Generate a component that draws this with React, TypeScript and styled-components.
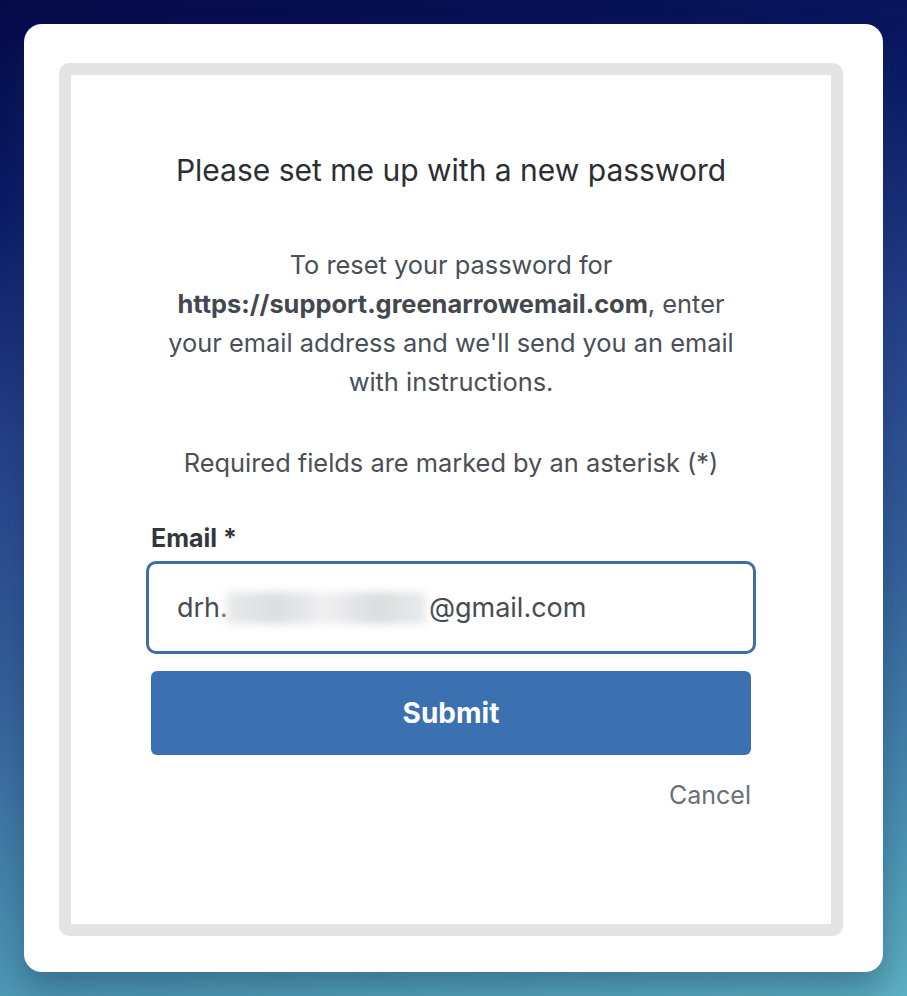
import React from 'react';
import styled, { createGlobalStyle } from 'styled-components';

const GlobalStyle = createGlobalStyle`
  html, body {
    margin: 0;
    padding: 0;
  }
  body {
    font-family: Inter, Roboto, "Liberation Sans", sans-serif;
  }
`;

const Page = styled.div`
  width: 907px;
  height: 996px;
  box-sizing: border-box;
  padding: 24px;
  background: linear-gradient(172deg, #060a48 0%, #0a1a66 18%, #26408a 40%, #35609a 62%, #4a90b0 85%, #5cb0c0 100%);
`;

const Card = styled.div`
  height: 948px;
  box-sizing: border-box;
  padding: 39px 40px 36px 35px;
  background: #fff;
  border-radius: 18px;
  box-shadow: 0 18px 30px rgba(20, 50, 80, 0.35);
`;

const Frame = styled.div`
  height: 100%;
  box-sizing: border-box;
  border: 12px solid #e4e4e4;
  border-radius: 10px;
  background: #fff;
  display: flex;
  flex-direction: column;
  align-items: center;
  padding-top: 77px;
`;

const Content = styled.div`
  width: 600px;
  display: flex;
  flex-direction: column;
`;

const Heading = styled.h1`
  margin: 0;
  font-size: 30px;
  font-weight: 400;
  line-height: 36px;
  color: #2b2e33;
  text-align: center;
`;

const Text = styled.p<{ $gap: number }>`
  margin: ${(p) => p.$gap}px -20px 0;
  font-size: 25.4px;
  line-height: 39px;
  color: #4a4f57;
  text-align: center;

  strong {
    font-weight: 700;
    color: #43484f;
  }
`;

const Label = styled.label`
  margin-top: 41px;
  font-size: 25px;
  font-weight: 700;
  line-height: 30px;
  color: #33373d;
`;

const InputBox = styled.div`
  margin: 8px -5px 0;
  height: 93px;
  box-sizing: border-box;
  border: 3px solid #3d6ea6;
  border-radius: 10px;
  display: flex;
  align-items: center;
  padding-left: 28px;
  font-size: 27px;
  color: #474c54;
`;

const Blurred = styled.span`
  display: inline-block;
  width: 200px;
  height: 32px;
  background: linear-gradient(90deg, #e9eaeb 0%, #dcdddf 25%, #f0f0f1 50%, #dbdcde 75%, #ebebec 100%);
  filter: blur(4px);
  margin: 0 3px 0 -2px;
`;

const SubmitButton = styled.button`
  margin-top: 17px;
  height: 84px;
  border: none;
  border-radius: 6px;
  background: #3b71b0;
  color: #fff;
  font-family: Inter, Roboto, "Liberation Sans", sans-serif;
  font-size: 28px;
  font-weight: 700;
  cursor: pointer;
`;

const Cancel = styled.a`
  align-self: flex-end;
  margin-top: 24px;
  font-size: 25px;
  line-height: 32px;
  color: #6a6f77;
  text-decoration: none;
  cursor: pointer;
`;

export default function App() {
  return (
    <>
      <GlobalStyle />
      <Page>
        <Card>
          <Frame>
            <Content>
              <Heading>Please set me up with a new password</Heading>
              <Text $gap={57}>
                To reset your password for
                <br />
                <strong>https://support.greenarrowemail.com</strong>, enter
                <br />
                your email address and we'll send you an email
                <br />
                with instructions.
              </Text>
              <Text $gap={42}>Required fields are marked by an asterisk (*)</Text>
              <Label>Email *</Label>
              <InputBox>
                drh.<Blurred />@gmail.com
              </InputBox>
              <SubmitButton>Submit</SubmitButton>
              <Cancel>Cancel</Cancel>
            </Content>
          </Frame>
        </Card>
      </Page>
    </>
  );
}
